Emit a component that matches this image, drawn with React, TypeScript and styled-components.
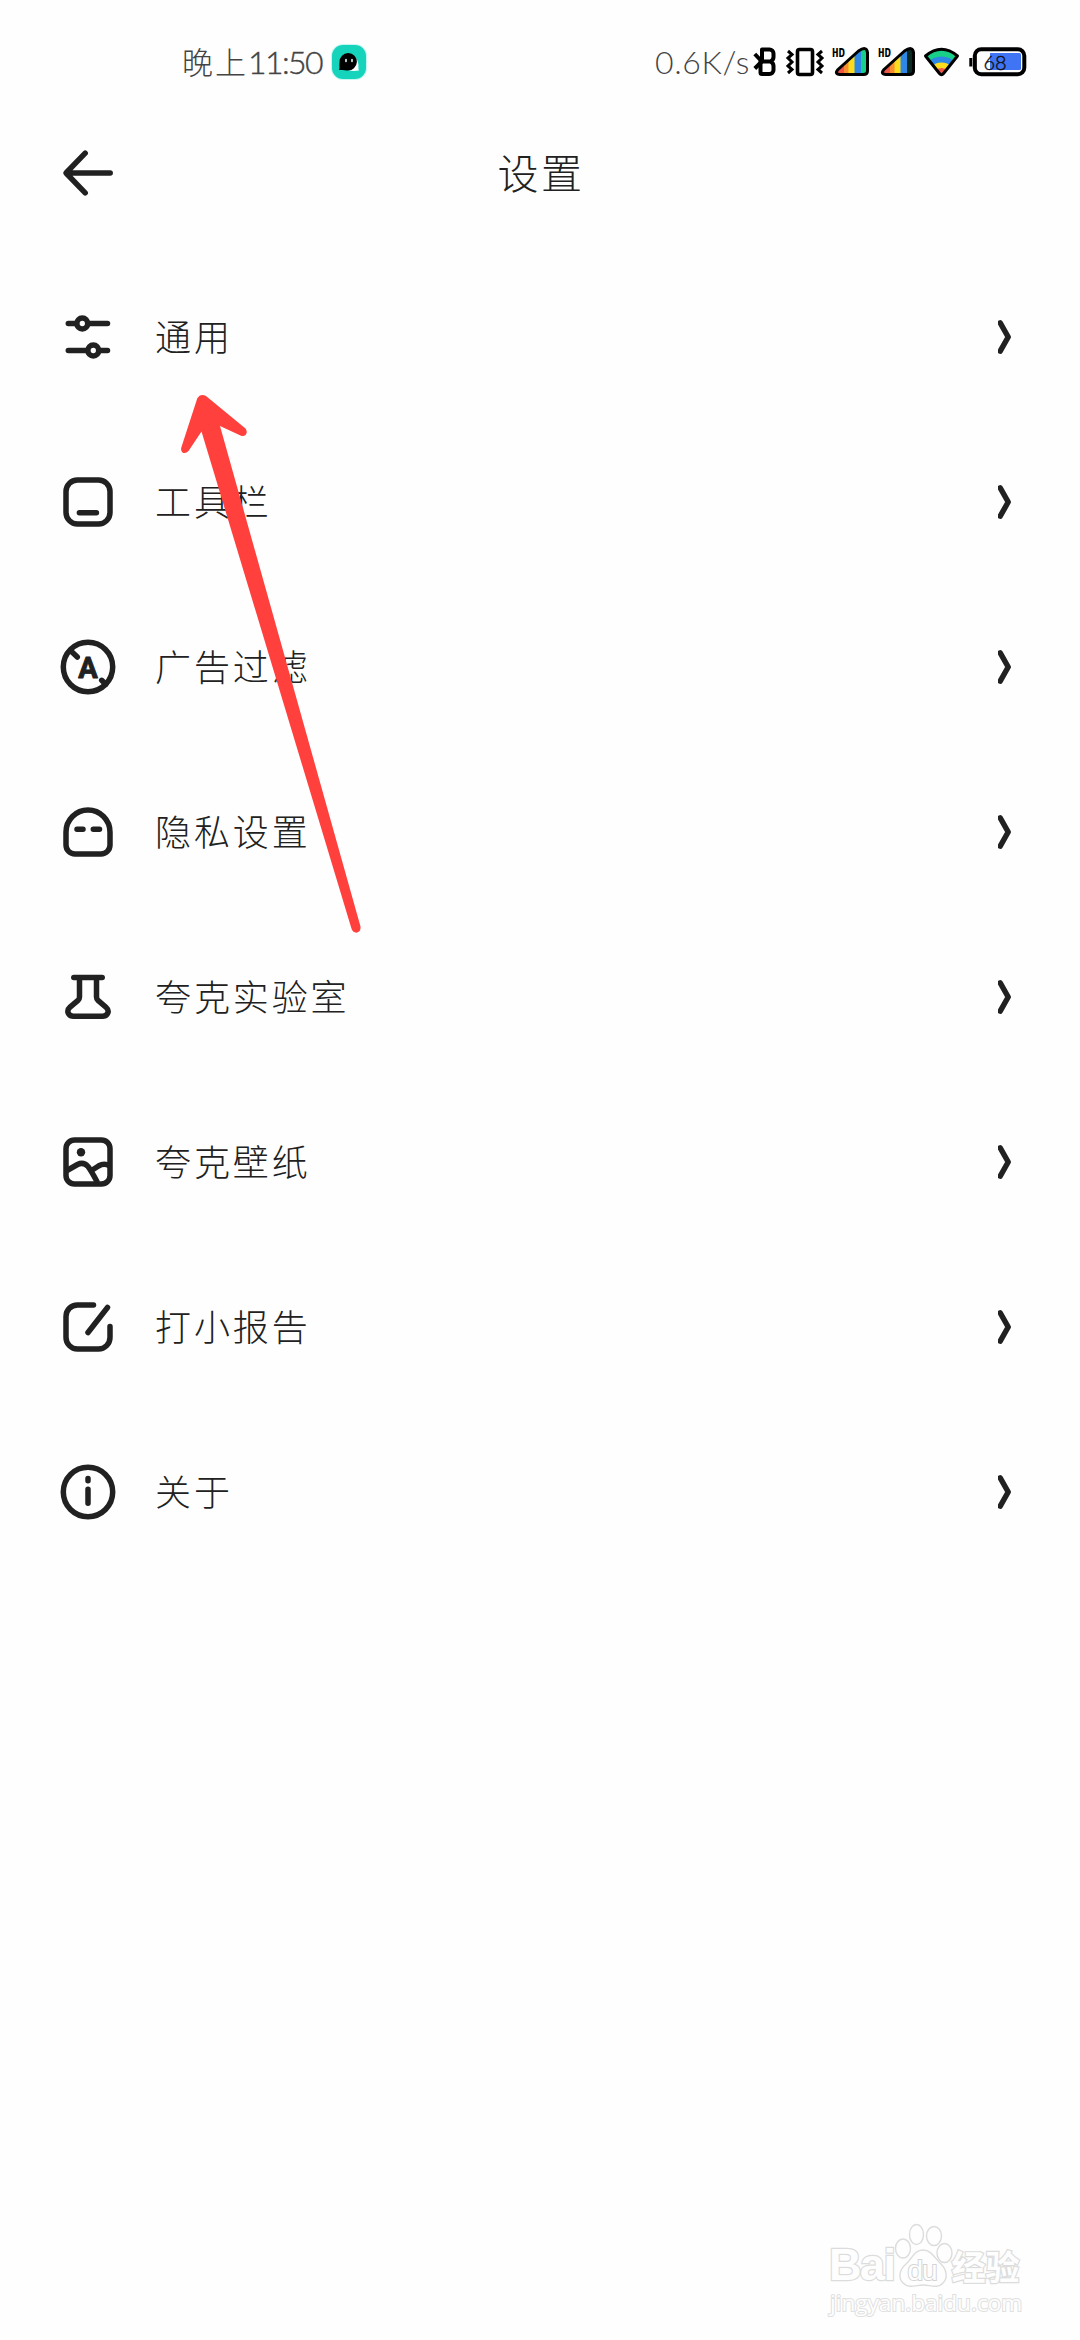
import React from "react";
import styled, { createGlobalStyle } from "styled-components";

const INK = "#212121";

const GlobalStyle = createGlobalStyle`
  * { box-sizing: border-box; }
  html, body { margin: 0; padding: 0; background: #fefefe; }
`;

const Screen = styled.main`
  position: relative;
  display: flex;
  flex-direction: column;
  width: 1080px;
  height: 2340px;
  overflow: hidden;
  background: #fefefe;
  color: ${INK};
  font-family: "Noto Sans CJK SC", sans-serif;
  font-weight: 300;
`;

const StatusBar = styled.header`
  display: flex;
  align-items: center;
  justify-content: space-between;
  height: 124px;
  padding: 0 53px 0 182px;
  color: #444;
`;

const StatusGroup = styled.div`
  display: flex;
  align-items: center;
`;

const StatusText = styled.span<{ $size?: number; $spacing?: number; $weight?: number }>`
  font-family: Lato, "Noto Sans CJK SC", sans-serif;
  font-weight: 300;
  font-size: ${(p) => p.$size ?? 32}px;
  line-height: 40px;
  letter-spacing: ${(p) => p.$spacing ?? 0}px;
  -webkit-text-stroke: ${(p) => p.$weight ?? 0}px #444;
  white-space: nowrap;
`;

const Glyph = styled.svg<{ $gap?: number }>`
  display: block;
  flex: none;
  margin-left: ${(p) => p.$gap ?? 0}px;
  overflow: visible;
`;

const TitleBar = styled.div`
  display: grid;
  grid-template-columns: 60px 1fr 60px;
  align-items: center;
  height: 98px;
  padding: 0 56px 0 58px;
`;

const Title = styled.h1`
  margin: 0;
  padding-bottom: 5px;
  font-size: 41px;
  font-weight: 300;
  line-height: 60px;
  letter-spacing: 2.5px;
  text-align: center;
`;

const IconButton = styled.button`
  display: flex;
  padding: 0;
  border: 0;
  background: none;
`;

const List = styled.nav`
  display: flex;
  flex-direction: column;
  padding-top: 32px;
`;

const Row = styled.a`
  display: flex;
  align-items: center;
  height: 165px;
  padding: 0 62px 0 58px;
`;

const Label = styled.span`
  flex: 1;
  margin-left: 37px;
  padding-bottom: 3px;
  font-size: 36px;
  line-height: 54px;
  letter-spacing: 2.9px;
`;

const LineIcon = styled.svg`
  display: block;
  flex: none;
  fill: none;
  stroke: ${INK};
  stroke-width: 5.5px;
  stroke-linecap: round;
  stroke-linejoin: round;
`;

const IconLetter = styled.text`
  font-family: Roboto, sans-serif;
  font-weight: 700;
  font-size: 29px;
  fill: ${INK};
  stroke-width: 0.9px;
`;

const PointerArrow = styled.svg`
  position: absolute;
  left: 170px;
  top: 385px;
  pointer-events: none;
`;

const Watermark = styled.div`
  position: absolute;
  left: 829px;
  top: 2222px;
  width: 196px;
  display: flex;
  flex-direction: column;
`;

const Brand = styled.div`
  display: flex;
  align-items: flex-end;
  height: 66px;
`;

const Outlined = styled.span<{ $size: number; $cjk?: boolean; $line: number; $spacing?: number }>`
  font-family: ${(p) => (p.$cjk ? '"Noto Sans CJK SC"' : '"Liberation Sans"')}, sans-serif;
  font-weight: 700;
  font-size: ${(p) => p.$size}px;
  line-height: ${(p) => p.$line}px;
  letter-spacing: ${(p) => p.$spacing ?? 0}px;
  color: #fefefe;
  -webkit-text-stroke: 2.4px #dcdcdc;
  paint-order: stroke fill;
`;

const PawText = styled.text`
  font-family: "Liberation Sans", sans-serif;
  font-size: 28px;
  fill: #fefefe;
  stroke: #d4d4d4;
  stroke-width: 2px;
  paint-order: stroke fill;
`;

const SiteUrl = styled.span`
  padding-left: 1px;
  font-family: "Open Sans", sans-serif;
  font-weight: 400;
  font-size: 22.6px;
  line-height: 30px;
  color: #fefefe;
  -webkit-text-stroke: 2px #e0e0e0;
  paint-order: stroke fill;
  white-space: nowrap;
`;

const AppBadge = () => (
  <Glyph $gap={9} width="36" height="36" viewBox="0 0 36 36">
    <rect x="0" y="0" width="36" height="36" rx="12" fill="#9ff2e8" opacity=".6" />
    <rect x="1" y="1" width="34" height="34" rx="11" fill="#16d3bc" />
    <path d="M25 14c4 6 1.500 10 3 12.500-6 1-10 .5-14-2z" fill="#fff" />
    <path d="M8 26c1-2 0-4 .5-8a8.700 8.700 0 1 1 8 8.400C13 26.500 11 26 8 26z" fill="#000" />
    <path d="M15 15.500v2M21 15.500v2" stroke="#dffcf8" strokeWidth="1.600" strokeLinecap="round" />
  </Glyph>
);

const Bluetooth = () => (
  <Glyph $gap={4} width="22" height="30" viewBox="0 0 22 30" fill="none" stroke="#000" strokeWidth="4">
    <path d="M8 14.500V2.500h7.500a4 4 0 0 1 4 4v3.500q0 3-3 4.500 3 1.500 3 4.500v4a4 4 0 0 1-4 4H8a1.500 1.500 0 0 1-1.500-1.500V14.500h10" strokeLinejoin="round" />
    <path d="M.8 7l7 7.500-7 7" />
  </Glyph>
);

const Vibrate = () => (
  <Glyph $gap={10} width="38" height="30" viewBox="0 0 38 30" fill="none" stroke="#000" strokeWidth="3.600">
    <rect x="11.500" y="2.500" width="15" height="25" rx="2" />
    <path d="M2 4l4 3.500-4 3.500 4 4-4 4 4 3.500-4 3.500M36 4l-4 3.500 4 3.500-4 4 4 4-4 3.500 4 3.500" strokeWidth="3" />
  </Glyph>
);

const HdText = styled.text`
  font-family: "DejaVu Sans Mono", monospace;
  font-weight: 700;
  font-size: 12px;
  fill: #000;
`;

const SIGNAL_SHAPE = "M6 22.500L26.500 4Q34.500-1.500 35.500 5.500V24q0 3.500-4 3.500H8q-6-.5-2-5z";

const Signal = ({ id, last, gap }: { id: string; last: string; gap: number }) => (
  <Glyph $gap={gap} width="38" height="30" viewBox="0 0 38 30">
    <clipPath id={id}>
      <path d={SIGNAL_SHAPE} />
    </clipPath>
    <g clipPath={`url(#${id})`}>
      <rect width="13" height="30" fill="#ef5548" />
      <rect x="12" width="5" height="30" fill="#f78f30" />
      <rect x="16.500" width="6.500" height="30" fill="#fddc1e" />
      <rect x="22.500" width="7" height="30" fill="#2e87e4" />
      <rect x="29" width="9" height="30" fill={last} />
    </g>
    <path d={SIGNAL_SHAPE} fill="none" stroke="#000" strokeWidth="3" strokeLinejoin="round" />
    <HdText x="0" y="10" textLength="13" lengthAdjust="spacingAndGlyphs">HD</HdText>
  </Glyph>
);

const WIFI_SHAPE = "M2.500 9Q18.500-4.500 34.500 9L20.500 26.500q-2 2.500-4 0z";

const Wifi = () => (
  <Glyph $gap={7} width="37" height="30" viewBox="0 0 37 30">
    <clipPath id="wifi">
      <path d={WIFI_SHAPE} />
    </clipPath>
    <g clipPath="url(#wifi)">
      <rect width="37" height="30" fill="#17cf86" />
      <circle cx="18.500" cy="30" r="20.500" fill="#2e87e4" />
      <circle cx="18.500" cy="30" r="14.500" fill="#fddc1e" />
      <circle cx="18.500" cy="30" r="9" fill="#ef5548" />
    </g>
    <path d={WIFI_SHAPE} fill="none" stroke="#000" strokeWidth="3" strokeLinejoin="round" />
  </Glyph>
);

const BatteryText = styled.text`
  font-family: Lato, sans-serif;
  font-weight: 300;
  font-size: 20px;
  fill: #111;
  stroke: #111;
  stroke-width: 0.4px;
`;

const Battery = () => (
  <Glyph $gap={9} width="58" height="30" viewBox="0 0 58 30">
    <rect x="5.800" y="2.300" width="49.500" height="25" rx="6.500" fill="#fefefe" stroke="#000" strokeWidth="4" />
    <path d="M1.800 11v8.500M5.800 9v12" stroke="#000" strokeWidth="3" />
    <path d="M21 6h29.500q1.500 0 1.500 1.500v14q0 1.500-1.500 1.500H21z" fill="#3f74f5" />
    <BatteryText x="14.500" y="22.500" textLength="23">68</BatteryText>
  </Glyph>
);

const Chevron = () => (
  <LineIcon width="20" height="40" viewBox="0 0 20 40">
    <path d="M2.200 5.800L10.200 20l-8 14.200" />
  </LineIcon>
);

const icons: Record<string, React.ReactNode> = {
  sliders: (
    <>
      <path d="M10.300 16.500H17M31 16.500h18.500M10.300 43.500H28M42 43.500h7.500" />
      <circle cx="24.300" cy="16.500" r="5.400" />
      <circle cx="35.300" cy="43.500" r="5.400" />
    </>
  ),
  toolbar: (
    <>
      <rect x="8" y="8" width="44" height="44" rx="11.500" />
      <path d="M21.400 40.700h17" />
    </>
  ),
  adblock: (
    <>
      <circle cx="30" cy="30" r="24.700" />
      <path d="M12.700 13.700l6.600 6.300M43.700 43.300l4 4" />
      <IconLetter x="30" y="40.500" textAnchor="middle">A</IconLetter>
    </>
  ),
  ghost: (
    <>
      <path d="M8 30a22 22 0 0 1 44 0v13a9 9 0 0 1-9 9H17a9 9 0 0 1-9-9z" />
      <path d="M19 27.300h6M35.300 27.300h6.200" />
    </>
  ),
  flask: (
    <>
      <path d="M15.800 10.500h28.400" />
      <path d="M21.500 11v19q0 2-1.500 3.300L12 40.200C8 43.700 10 49.300 15.500 49.300h29c5.500 0 7.500-5.600 3.500-9.100l-8-6.900q-1.500-1.300-1.500-3.300V11" />
    </>
  ),
  picture: (
    <>
      <rect x="8" y="8" width="44" height="44" rx="8.500" />
      <circle cx="23" cy="20.200" r="4.200" fill={INK} stroke="none" />
      <path d="M9 38.500l10.500-6Q25.500 29.500 30 34.500q2.500 3 9.500 16M33.500 38.500l7-4.500q6-3.500 11 0" strokeLinecap="butt" />
    </>
  ),
  report: (
    <>
      <path d="M35.500 7.900H19.500A11.500 11.500 0 0 0 8 19.400V40.500A11.500 11.500 0 0 0 19.500 52h21A11.500 11.500 0 0 0 52 40.500V29.500" />
      <path d="M30 35.500L49.500 10.500" />
    </>
  ),
  info: (
    <>
      <circle cx="30" cy="30" r="24.700" />
      <path d="M30 16.500v2.300M30 27.300v14" />
    </>
  ),
};

const items = [
  { icon: "sliders", label: "通用" },
  { icon: "toolbar", label: "工具栏" },
  { icon: "adblock", label: "广告过滤" },
  { icon: "ghost", label: "隐私设置" },
  { icon: "flask", label: "夸克实验室" },
  { icon: "picture", label: "夸克壁纸" },
  { icon: "report", label: "打小报告" },
  { icon: "info", label: "关于" },
];

export default function App() {
  return (
    <>
      <GlobalStyle />
      <Screen>
        <StatusBar>
          <StatusGroup>
            <StatusText $size={31} $spacing={2}>晚上</StatusText>
            <StatusText $spacing={-1.6} $weight={0.4}>11:50</StatusText>
            <AppBadge />
          </StatusGroup>
          <StatusGroup>
            <StatusText $spacing={0.6}>0.6K/s</StatusText>
            <Bluetooth />
            <Vibrate />
            <Signal id="sim1" last="#19cf8c" gap={8} />
            <Signal id="sim2" last="#0b2a22" gap={8} />
            <Wifi />
            <Battery />
          </StatusGroup>
        </StatusBar>

        <TitleBar>
          <IconButton aria-label="返回">
            <LineIcon width="60" height="60" viewBox="0 0 60 60">
              <path d="M27.200 10.200L8 30l19.200 19.800M9 30h43.200" />
            </LineIcon>
          </IconButton>
          <Title>设置</Title>
        </TitleBar>

        <List>
          {items.map(({ icon, label }) => (
            <Row key={icon}>
              <LineIcon width="60" height="60" viewBox="0 0 60 60">
                {icons[icon]}
              </LineIcon>
              <Label>{label}</Label>
              <Chevron />
            </Row>
          ))}
        </List>

        <PointerArrow width="200" height="560" viewBox="170 385 200 560">
          <path
            d="M197.300 398.300Q200.500 393 206 396L245.500 428.500Q248 432 245.500 435Q243.500 436.800 240.500 435.500L220 426L360.500 926.500Q361 932 356.500 932.700Q352.500 932.500 351.300 928L201.500 431.500L188.500 451Q185.500 454 182.500 452.500Q180.500 451 181.300 447.500Z"
            fill="#ff403d"
          />
        </PointerArrow>

        <Watermark>
          <Brand>
            <Outlined $size={45} $line={46} $spacing={-1.5}>Bai</Outlined>
            <Glyph $gap={-1} width="58" height="66" viewBox="0 0 58 66">
              <g fill="#fefefe" stroke="#dcdcdc" strokeWidth="1.400">
                <ellipse cx="9" cy="26.500" rx="7.500" ry="9.500" />
                <ellipse cx="22.500" cy="12.500" rx="7" ry="10" />
                <ellipse cx="40" cy="14" rx="7.500" ry="9.500" />
                <ellipse cx="50.500" cy="31" rx="7.500" ry="9.500" />
                <path d="M29 28c-9 0-11 9-17 14C5 48 4 56 9 61c6 6 13 2 20 2s15 4 20-2c5-5 4-13-2-19-6-5-9-14-18-14z" />
              </g>
              <PawText x="13.500" y="58" textLength="30">du</PawText>
            </Glyph>
            <Outlined $size={34} $line={44} $cjk>经验</Outlined>
          </Brand>
          <SiteUrl>jingyan.baidu.com</SiteUrl>
        </Watermark>
      </Screen>
    </>
  );
}
